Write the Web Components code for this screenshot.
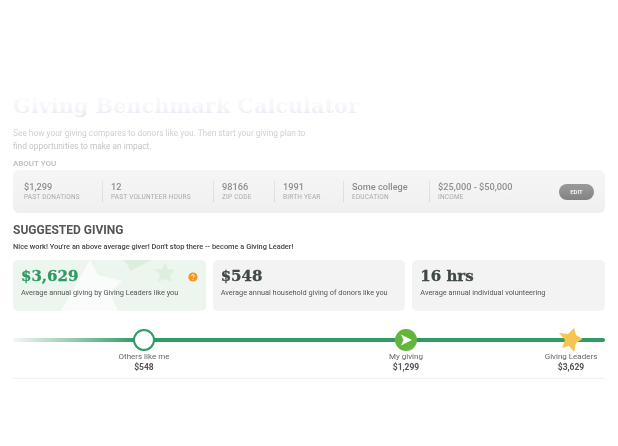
<!DOCTYPE html>
<html>
<head>
<meta charset="utf-8">
<title>Giving Benchmark Calculator</title>
<style>
    html, body { margin: 0; padding: 0; background: #fff; }
    body { font-family: Roboto, "Liberation Sans", sans-serif; width: 618px; height: 446px; overflow: hidden; }
</style>
</head>
<body>
<benchmark-page>
    <about-bar>
        <about-item value="$1,299" label="PAST DONATIONS" style="width:78px"></about-item>
        <about-item value="12" label="PAST VOLUNTEER HOURS" style="width:102px"></about-item>
        <about-item value="98166" label="ZIP CODE" style="width:52px"></about-item>
        <about-item value="1991" label="BIRTH YEAR" style="width:60px"></about-item>
        <about-item value="Some college" label="EDUCATION" style="width:77px"></about-item>
        <about-item value="$25,000 - $50,000" label="INCOME" last></about-item>
    </about-bar>
    <div slot="stats">
        <stat-card value="$3,629" text="Average annual giving by Giving Leaders like you" leader></stat-card>
        <stat-card value="$548" text="Average annual household giving of donors like you"></stat-card>
        <stat-card value="16 hrs" text="Average annual individual volunteering"></stat-card>
    </div>
    <giving-timeline slot="timeline"></giving-timeline>
</benchmark-page>

<script>
class BenchmarkPage extends HTMLElement {
    constructor() {
        super();
        this.attachShadow({ mode: 'open' });
        this.shadowRoot.innerHTML = `
            <style>
                :host { display: block; position: relative; height: 446px; }
                .content {
                    padding: 94px 13px 0;
                    filter: blur(0.6px);
                }
                h1 {
                    margin: 0;
                    font: bold 20.8px/24px "DejaVu Serif", serif;
                    color: #3f3fa8;
                    white-space: nowrap;
                }
                .intro {
                    margin: 9px 0 0;
                    width: 300px;
                    font-size: 8.35px;
                    line-height: 13px;
                    color: #555;
                }
                .about {
                    margin: 5px 0 1px;
                    font-size: 8px;
                    line-height: 11px;
                    font-weight: 500;
                    color: #666;
                }
                h2 {
                    margin: 10px 0 0;
                    font-size: 12px;
                    line-height: 14px;
                    font-weight: 700;
                    color: #555;
                }
                .nice {
                    margin: 4px 0 0;
                    font-size: 7.4px;
                    line-height: 11px;
                    font-weight: 500;
                    color: #444;
                }
                ::slotted([slot=stats]) {
                    display: grid;
                    grid-template-columns: repeat(3, 1fr);
                    gap: 7px;
                    margin-top: 8px;
                }
                ::slotted([slot=timeline]) { margin-top: 16px; }
                .fade {
                    position: absolute;
                    left: 0; right: 0; top: 0;
                    height: 230px;
                    pointer-events: none;
                    background: linear-gradient(to bottom, #fff 90px, rgba(255,255,255,.95) 108px, rgba(255,255,255,.7) 135px, rgba(255,255,255,.42) 190px, rgba(255,255,255,.2) 215px, rgba(255,255,255,0) 228px);
                }
            </style>
            <div class="content">
                <h1>Giving Benchmark Calculator</h1>
                <p class="intro">See how your giving compares to donors like you. Then start your giving plan to find opportunities to make an impact.</p>
                <div class="about">ABOUT YOU</div>
                <slot></slot>
                <h2>SUGGESTED GIVING</h2>
                <p class="nice">Nice work! You're an above average giver! Don't stop there -- become a Giving Leader!</p>
                <slot name="stats"></slot>
                <slot name="timeline"></slot>
            </div>
            <div class="fade"></div>
        `;
    }
}
customElements.define('benchmark-page', BenchmarkPage);

class AboutBar extends HTMLElement {
    constructor() {
        super();
        this.attachShadow({ mode: 'open' });
        this.shadowRoot.innerHTML = `
            <style>
                :host {
                    display: flex;
                    align-items: center;
                    height: 43px;
                    padding: 0 11px;
                    background: #ebebeb;
                    border-radius: 6px;
                }
                .items { display: flex; flex: 1; }
                button {
                    width: 35px;
                    height: 16px;
                    padding: 0;
                    border: 0;
                    border-radius: 8px;
                    background: #444;
                    color: #fff;
                    font: 500 6px Roboto, sans-serif;
                }
            </style>
            <div class="items"><slot></slot></div>
            <button type="button">EDIT</button>
        `;
    }
}
customElements.define('about-bar', AboutBar);

class AboutItem extends HTMLElement {
    constructor() {
        super();
        this.attachShadow({ mode: 'open' });
        this.shadowRoot.innerHTML = `
            <style>
                :host {
                    display: block;
                    height: 21px;
                    border-right: 1px solid #ccc;
                    margin-right: 8px;
                    white-space: nowrap;
                }
                :host([last]) { border-right: 0; }
                .value { font-size: 9.2px; line-height: 12px; font-weight: 500; color: #333; }
                .label { font-size: 6.5px; line-height: 9px; letter-spacing: .2px; color: #777; }
            </style>
            <div class="value"></div>
            <div class="label"></div>
        `;
    }
    connectedCallback() {
        this.shadowRoot.querySelector('.value').textContent = this.getAttribute('value');
        this.shadowRoot.querySelector('.label').textContent = this.getAttribute('label');
    }
}
customElements.define('about-item', AboutItem);

class StatCard extends HTMLElement {
    constructor() {
        super();
        this.attachShadow({ mode: 'open' });
        this.shadowRoot.innerHTML = `
            <style>
                :host {
                    display: block;
                    position: relative;
                    height: 51px;
                    box-sizing: border-box;
                    padding: 5px 8px;
                    border-radius: 5px;
                    background: #f3f3f3;
                    overflow: hidden;
                }
                :host([leader]) { background: #edf5ef; }
                .value {
                    position: relative;
                    font: bold 15px/22px "DejaVu Serif", serif;
                    -webkit-text-stroke: .3px currentColor;
                    color: #404848;
                    white-space: nowrap;
                }
                :host([leader]) .value { color: #2f9a63; }
                .text {
                    position: relative;
                    margin-top: 1px;
                    font-size: 7.35px;
                    line-height: 10px;
                    color: #555;
                    white-space: nowrap;
                }
                .decor, .help { display: none; }
                :host([leader]) .decor { display: block; position: absolute; left: 0; top: 0; }
                :host([leader]) .help { display: block; position: absolute; left: 175px; top: 12px; }
            </style>
            <svg class="decor" width="193" height="51" viewBox="0 0 193 51">
                <path d="M77 0 L85 15 L109 21 L97 33 L105 51 L48 51 Z" fill="#f9fcfa"/>
                <path d="M110 0 L139 0 L125 7 L117 11 L114 4 Z" fill="#dcefdf"/>
                <path d="M152 2 L155 9 L162 10 L157 15 L159 22 L152 19 L145 22 L147 14 L141 9 L149 9 Z" fill="#deeedf"/>
            </svg>
            <div class="value"></div>
            <div class="text"></div>
            <svg class="help" width="10" height="10" viewBox="0 0 10 10">
                <circle cx="5" cy="5" r="4.6" fill="#f7941d"/>
                <path d="M3.6 3.9 C3.7 2.2 6.4 2.3 6.4 3.9 C6.4 5 5 5 5 6.1" fill="none" stroke="#fff" stroke-width="1"/>
                <circle cx="5" cy="7.6" r=".6" fill="#fff"/>
            </svg>
        `;
    }
    connectedCallback() {
        this.shadowRoot.querySelector('.value').textContent = this.getAttribute('value');
        this.shadowRoot.querySelector('.text').textContent = this.getAttribute('text');
    }
}
customElements.define('stat-card', StatCard);

class GivingTimeline extends HTMLElement {
    constructor() {
        super();
        this.attachShadow({ mode: 'open' });
        this.shadowRoot.innerHTML = `
            <style>
                :host {
                    display: block;
                    position: relative;
                    height: 51px;
                    border-bottom: 1px solid #f0f0f0;
                }
                .track {
                    position: absolute;
                    left: 0; right: 0; top: 11px;
                    height: 4px;
                    border-radius: 2px;
                    background: linear-gradient(to right, #f2f8f4 0, #2f9a63 125px);
                }
                .marker {
                    position: absolute;
                    top: 1px;
                    width: 90px;
                    margin-left: -45px;
                    text-align: center;
                }
                .marker svg { display: block; margin: 0 auto; }
                .name { margin-top: -1px; font-size: 8px; line-height: 11px; color: #666; }
                .amount { font-size: 8.5px; line-height: 11px; font-weight: 700; color: #555; }
            </style>
            <div class="track"></div>
            <div class="marker" style="left:131px">
                <svg width="24" height="24" viewBox="0 0 24 24"><circle cx="12" cy="12" r="10" fill="#fff" stroke="#2f9a63" stroke-width="2"/></svg>
                <div class="name">Others like me</div>
                <div class="amount">$548</div>
            </div>
            <div class="marker" style="left:393px">
                <svg width="24" height="24" viewBox="0 0 24 24"><circle cx="12" cy="12" r="11" fill="#63b53c"/><path d="M7 6.5 L18 12 L7 17.5 L9.5 12 Z" fill="#fff"/></svg>
                <div class="name">My giving</div>
                <div class="amount">$1,299</div>
            </div>
            <div class="marker" style="left:558px">
                <svg width="24" height="24" viewBox="0 0 24 24"><path d="M15 0 L17 7 L23.5 11 L17 15 L15 24 L10 18 L3 20 L6 12 L0 5 L9 6 Z" fill="#f5c452"/></svg>
                <div class="name">Giving Leaders</div>
                <div class="amount">$3,629</div>
            </div>
        `;
    }
}
customElements.define('giving-timeline', GivingTimeline);
</script>
</body>
</html>
